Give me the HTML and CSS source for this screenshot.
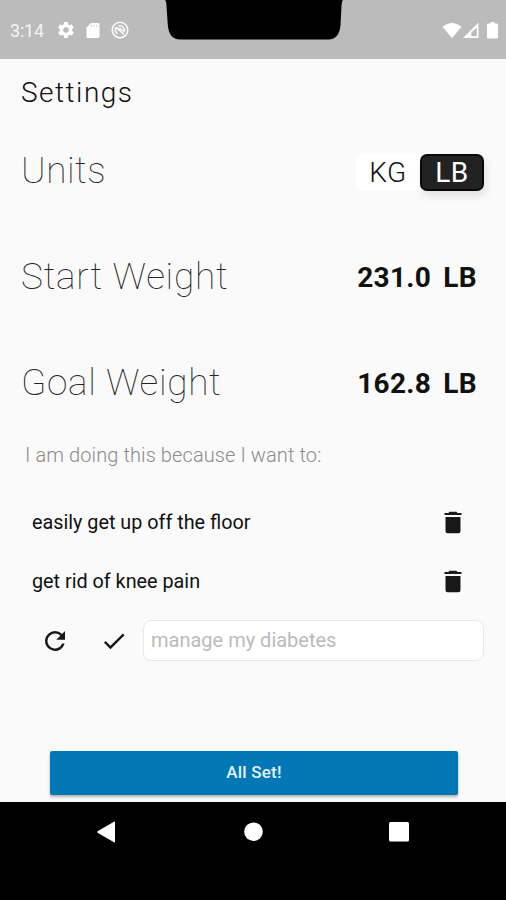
FILE: index.html
```
<!DOCTYPE html>
<html lang="en">
    <head>
        <meta charset="UTF-8">
        <meta name="viewport" content="width=device-width, initial-scale=1.0">
        <title>Settings</title>
        <link rel="stylesheet" href="styles.css">
    </head>
    <body>
        <header class="status-bar">
            <span class="time">3:14</span>
            <svg width="20" height="20" viewBox="0 0 24 24"><path d="M19.1 12.9c0-.3.1-.6.1-.9s0-.6-.1-.9l2-1.6c.2-.1.2-.4.1-.6l-1.9-3.3c-.1-.2-.4-.3-.6-.2l-2.4 1c-.5-.4-1-.7-1.6-.9l-.4-2.6c0-.2-.2-.4-.5-.4h-3.8c-.2 0-.4.2-.5.4l-.4 2.6c-.6.2-1.1.5-1.6.9l-2.4-1c-.2-.1-.5 0-.6.2L2.7 8.9c-.1.2-.1.5.1.6l2 1.600c0 .3-.1.6-.1.9s0 .6.1.9l-2 1.600c-.2.1-.2.4-.1.6l1.900 3.300c.1.2.4.3.6.2l2.400-1c.5.4 1 .7 1.600.9l.4 2.600c0 .2.2.4.5.4h3.800c.2 0 .4-.2.5-.4l.4-2.600c.6-.2 1.100-.5 1.600-.9l2.400 1c.2.1.5 0 .6-.2l1.900-3.300c.1-.2.1-.5-.1-.6l-2-1.600zM12 15.300a3.300 3.300 0 1 1 0-6.600 3.300 3.300 0 0 1 0 6.600z"/></svg>
            <svg class="sd-card" width="14" height="17" viewBox="0 0 14 17"><path d="M5 1h7q1.500 0 1.500 1.500v12q0 1.500-1.500 1.500H2q-1.500 0-1.500-1.500V5.500z"/><path class="slots" d="M5.500 3v1.500M8 3v1.500M10.500 3v1.500"/></svg>
            <svg class="no-sync" width="18" height="18" viewBox="0 0 18 18"><circle cx="9" cy="9" r="7.800"/><path d="M6.500 12.800A4.500 4.500 0 0 1 5 6.500M7.500 5a4.500 4.500 0 0 1 5.500 6M5 6l8 7.500M7 9.500l2-2 3 2.500"/></svg>
            <div class="notch">
                <svg width="178" height="40" viewBox="0 0 178 40"><path d="M0 0h178q-1 0-1.500 6l-1 19q-1 14-12 14.500H15Q4 39.500 2.800 25L1.500 6Q1 0 0 0z"/></svg>
            </div>
            <div class="signals">
                <svg width="20" height="17" viewBox="0 0 20 17"><path d="M.5 4.800Q10-2.800 19.500 4.800L10 16z"/></svg>
                <svg width="16" height="17" viewBox="0 0 16 17"><path fill-rule="evenodd" d="M15.500.5V16H0zM13.800 5.500 8.300 10.500v3.800h5.500z"/></svg>
                <svg class="battery" width="11" height="17" viewBox="0 0 11 17"><path d="M3.500 0h4v1.500H10q1 0 1 1v13q0 1-1 1H1q-1 0-1-1v-13q0-1 1-1h2.500z"/></svg>
            </div>
        </header>

        <main>
            <h1>Settings</h1>
            <div class="row">
                <span class="label units">Units</span>
                <div class="toggle">
                    <button>KG</button>
                    <button class="active">LB</button>
                </div>
            </div>
            <div class="row">
                <span class="label start">Start Weight</span>
                <span class="weight">231.0 LB</span>
            </div>
            <div class="row">
                <span class="label goal">Goal Weight</span>
                <span class="weight">162.8 LB</span>
            </div>

            <p class="because">I am doing this because I want to:</p>
            <div class="reason">
                <span>easily get up off the floor</span>
                <svg width="18" height="23" viewBox="0 0 18 23"><path d="M.5 2h4l1-1.300h7l1 1.300h4v2H.5zM1.500 6h15v14q0 2.200-2 2.200h-11q-2 0-2-2.200z"/></svg>
            </div>
            <div class="reason">
                <span>get rid of knee pain</span>
                <svg width="18" height="23" viewBox="0 0 18 23"><path d="M.5 2h4l1-1.300h7l1 1.300h4v2H.5zM1.500 6h15v14q0 2.200-2 2.200h-11q-2 0-2-2.200z"/></svg>
            </div>
            <div class="add-reason">
                <svg width="30" height="30" viewBox="0 0 24 24"><path d="M17.650 6.350A7.958 7.958 0 0 0 12 4a8 8 0 1 0 7.730 10h-2.080A6 6 0 1 1 12 6c1.660 0 3.140.690 4.220 1.780L13 11h7V4z"/></svg>
                <svg width="28" height="28" viewBox="0 0 24 24"><path d="M9 16.170 4.830 12l-1.420 1.410L9 19 21 7l-1.410-1.410z"/></svg>
                <input type="text" placeholder="manage my diabetes">
            </div>

            <button class="all-set">All Set!</button>
        </main>

        <nav>
            <svg width="20" height="22" viewBox="0 0 20 22"><path d="M1 10 17 .7q1-.5 1 .5v19.600q0 1-1 .5L1 12q-1.500-1 0-2z"/></svg>
            <svg width="20" height="22" viewBox="0 0 20 22"><circle cx="10.500" cy="10.700" r="9.300"/></svg>
            <svg width="20" height="22" viewBox="0 0 20 22"><rect x="0" y="1" width="20" height="19.500" rx="1.500"/></svg>
        </nav>
    </body>
</html>
```
FILE: styles.css
```
* {
    box-sizing: border-box;
}

body {
    margin: 0;
    height: 900px;
    display: flex;
    flex-direction: column;
    overflow: hidden;
    background-color: #fafafa;
    color: #111;
    font-family: Roboto, "Liberation Sans", sans-serif;
}

button {
    border: none;
    padding: 0;
    font-family: inherit;
}

.status-bar {
    position: relative;
    height: 59px;
    flex: none;
    display: flex;
    align-items: center;
    padding: 1px 8px 0 10px;
    background-color: #bbb;
    color: #f4f4f4;
    fill: white;
}

.time {
    width: 46px;
    font-size: 18px;
    letter-spacing: -.2px;
}

.sd-card {
    margin: 0 11px 0 10px;
}

.slots {
    stroke: #ccc;
}

.no-sync {
    fill: none;
    stroke: white;
    stroke-width: 1.5;
}

.notch {
    position: absolute;
    top: 0;
    left: 165px;
    fill: black;
}

.signals {
    display: flex;
    gap: 1px;
    margin-left: auto;
}

.battery {
    margin-left: 7px;
}

main {
    height: 743px;
    flex: none;
    display: flex;
    flex-direction: column;
    padding: 0 22px;
}

h1 {
    height: 60px;
    margin: 0 0 0 -1px;
    padding-top: 1px;
    font-size: 28px;
    font-weight: 350;
    line-height: 66px;
    letter-spacing: 1.5px;
}

.row {
    height: 106px;
    display: flex;
    align-items: center;
    justify-content: space-between;
}

.label {
    margin: -4px 0 0 -1px;
    font-size: 37px;
    font-weight: 150;
    color: #222;
}

.units {
    letter-spacing: .5px;
}

.start {
    letter-spacing: .75px;
}

.goal {
    letter-spacing: .65px;
}

.weight {
    padding-right: 7px;
    margin-top: -2px;
    font-size: 28px;
    font-weight: 700;
    letter-spacing: .3px;
    word-spacing: 5px;
}

.toggle {
    display: flex;
    background-color: white;
    border-radius: 5px;
}

.toggle button {
    width: 64px;
    height: 37px;
    background-color: white;
    border-radius: 7px;
    font-size: 28px;
    font-weight: 300;
    line-height: 33px;
    letter-spacing: .5px;
    color: #111;
}

.toggle .active {
    background-color: #222;
    border: 2px solid #080808;
    box-shadow: 2px 5px 8px rgba(0, 0, 0, .1);
    font-weight: 400;
    line-height: 31px;
    color: white;
}

.because {
    height: 56px;
    margin: 0;
    padding: 0 3px;
    font-size: 20px;
    font-weight: 300;
    line-height: 36px;
    letter-spacing: .1px;
    color: #8c8c8c;
}

.reason {
    height: 59px;
    display: flex;
    align-items: center;
    justify-content: space-between;
    padding: 0 22px 0 10px;
    font-size: 19.8px;
    fill: #181818;
}

.add-reason {
    height: 59px;
    display: flex;
    align-items: center;
    padding-left: 18px;
    fill: #181818;
}

.add-reason svg + svg {
    margin-left: 30px;
}

input {
    width: 341px;
    height: 41px;
    margin-left: auto;
    padding: 0 7px 1px;
    border: 1px solid #e8e8e8;
    border-radius: 8px;
    background-color: white;
    font-family: inherit;
    font-size: 20px;
}

input::placeholder {
    color: #bbb;
}

.all-set {
    width: 408px;
    height: 44px;
    margin: auto auto 7px 28px;
    padding-bottom: 2px;
    background-color: #0277b5;
    border-radius: 2px;
    box-shadow: 0 2px 3px rgba(0, 0, 0, .3);
    font-size: 17px;
    font-weight: 500;
    letter-spacing: .2px;
    color: #e3f1fa;
}

nav {
    height: 98px;
    flex: none;
    display: flex;
    justify-content: space-between;
    padding: 19px 97px 0 97px;
    background-color: black;
    fill: white;
}
```
